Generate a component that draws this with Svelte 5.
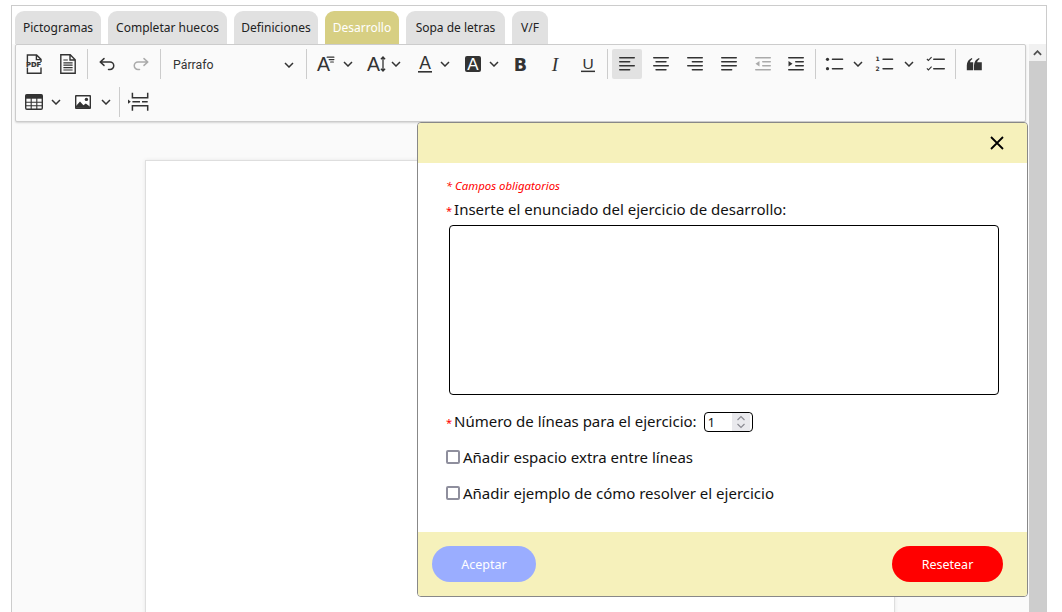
<script>
  const tabs = [
    ['Pictogramas', 86], ['Completar huecos', 119], ['Definiciones', 84],
    ['Desarrollo', 74], ['Sopa de letras', 99], ['V/F', 36]
  ];
  const A = (y = 16.8, x = 7.5, s = 19.5) => `<text x="${x}" y="${y}" font-family="Liberation Sans" font-size="${s}" text-anchor="middle" fill="#333">A</text>`;
  const lines = (rows) => rows.map(([x, y, w]) => `<rect x="${x}" y="${y}" width="${w}" height="1.5" rx=".75"/>`).join('');
  const icons = {
    pdf: `<path d="M3.400 8V1h9.200l4.400 4.400V8M12.400 1.200v4.400H17M3.400 13.600v5.600h13.600v-5.600" fill="none" stroke="#333" stroke-width="1.4"/><text x="9.600" y="13" font-family="DejaVu Sans" font-weight="700" font-size="6.800" text-anchor="middle" fill="#333" stroke="#333" stroke-width=".2">PDF</text>`,
    doc: `<path d="M2.800.8h9.400L17.200 5.800v13.400H2.800zM12 1v5h5" fill="none" stroke="#333" stroke-width="1.4"/><path d="M5.400 6h4.400M5.400 8.800h9.200M5.400 11.200h9.200M5.400 13.600h9.200M5.400 16h9.200" stroke="#333" stroke-width="1.2"/>`,
    undo: `<path d="M7 4.600 3.200 8 7 11.400M3.400 8H13a3.700 3.700 0 0 1 0 7.500h-1.500" fill="none" stroke="#333" stroke-width="1.5" stroke-linecap="round" stroke-linejoin="round"/>`,
    redo: `<path d="M13 4.600 16.800 8 13 11.400M16.600 8H7a3.700 3.700 0 0 0 0 7.500h1.500" fill="none" stroke="#aaa" stroke-width="1.5" stroke-linecap="round" stroke-linejoin="round"/>`,
    size: A() + `<g fill="#333">${lines([[10.5, 2.6, 8], [12.5, 5, 6], [14, 7.4, 4]]).replaceAll('height="1.5"', 'height="1.2"')}</g>`,
    height: A() + `<path d="M17 3v14M14.900 5.200 17 3l2.100 2.200M14.900 14.800 17 17l2.100-2.200" fill="none" stroke="#333" stroke-width="1.3"/>`,
    color: A(15.4, 10, 17.5) + `<rect x="3" y="17" width="14" height="1.6" fill="#333"/>`,
    bg: `<rect x="2" y="2" width="16" height="16" rx="2" fill="#333"/><text x="10" y="16" font-family="Liberation Sans" font-size="17" text-anchor="middle" fill="#fff">A</text>`,
    bold: `<text x="10.500" y="16.600" font-family="DejaVu Sans" font-weight="700" font-size="17.500" text-anchor="middle" fill="#333">B</text>`,
    italic: `<text x="11" y="16.500" font-family="Liberation Serif" font-style="italic" font-size="19.500" text-anchor="middle" fill="#333">I</text>`,
    underline: `<text x="10" y="14.500" font-family="Liberation Sans" font-size="15.500" text-anchor="middle" fill="#333">U</text><rect x="3" y="16.600" width="14" height="1.500" fill="#333"/>`,
    left: `<g fill="#333">${lines([[2, 3, 16], [2, 7, 11.4], [2, 11, 16], [2, 15, 11.4]])}</g>`,
    center: `<g fill="#333">${lines([[2, 3, 16], [4.3, 7, 11.4], [2, 11, 16], [4.3, 15, 11.4]])}</g>`,
    right: `<g fill="#333">${lines([[2, 3, 16], [6.6, 7, 11.4], [2, 11, 16], [6.6, 15, 11.4]])}</g>`,
    justify: `<g fill="#333">${lines([[2, 3, 16], [2, 7, 16], [2, 11, 16], [2, 15, 11.4]])}</g>`,
    outdent: `<g fill="#aaa">${lines([[2, 3, 16], [9, 7, 9], [9, 11, 9], [2, 15, 16]])}<path d="M2.500 9.700 6.500 7v5.400z"/></g>`,
    indent: `<g fill="#333">${lines([[2, 3, 16], [9, 7, 9], [9, 11, 9], [2, 15, 16]])}<path d="M6.500 9.700 2.500 7v5.400z"/></g>`,
    bullets: `<g fill="#333"><circle cx="2.500" cy="5.300" r="1.600"/><circle cx="2.500" cy="14.700" r="1.600"/>${lines([[6.7, 4.6, 11.6], [6.7, 14, 11.6]])}</g>`,
    numbers: `<g fill="#333">${lines([[8.3, 4.6, 11], [8.3, 14, 11]])}</g><text x="3.600" y="7.400" font-family="DejaVu Sans" font-weight="700" font-size="6" text-anchor="middle" fill="#333">1</text><text x="3.600" y="17.400" font-family="DejaVu Sans" font-weight="700" font-size="6" text-anchor="middle" fill="#333">2</text>`,
    todo: `<g fill="#333">${lines([[7, 4.6, 12], [7, 14, 12]])}</g><path d="M.9 5 2.400 6.500 5.600 3.200M.9 14.400l1.500 1.500 3.200-3.300" fill="none" stroke="#333" stroke-width="1.1"/>`,
    quote: `<path d="M1.800 16.300v-5c0-3.600 2-6.200 5-7.400l.6 1.200C6 6 5.200 7.100 5 8.300h3.200v8zM9 16.300v-5c0-3.600 2-6.200 5-7.400l.6 1.200c-1.400.9-2.200 2-2.400 3.200h4.600v8z" fill="#333"/>`,
    table: `<rect x="1.700" y="2.700" width="16.600" height="14.600" rx="1.200" fill="none" stroke="#333" stroke-width="1.4"/><rect x="1.700" y="2.700" width="16.600" height="4" fill="#333"/><path d="M7.200 6v11M12.800 6v11M2 10.200h16M2 13.800h16" stroke="#333" stroke-width="1.1"/>`,
    image: `<rect x="2" y="3" width="16" height="14" rx="1" fill="#333"/><rect x="3.400" y="4.500" width="13.200" height="11" fill="#fff"/><path d="M3 15.800V14l4-4.400 3.400 3.600 2.400-1.600 4 3v1.400z" fill="#333"/><circle cx="13.400" cy="7.400" r="1.700" fill="#333"/>`,
    pagebreak: `<path d="M3.400 .7v5h15.300v-5M3.400 18.700v-5h15.300v5" fill="none" stroke="#333" stroke-width="1.5"/><path d="M3.400 9.700h7.600M13 9.700h5.700" stroke="#333" stroke-width="1.6"/><path d="M-1 7.600l2.800 2.100L-1 11.800z" fill="#333"/>`
  };
  // [icon, tool width, gap before chevron (omitted = no chevron), active]
  const row1 = [
    ['pdf'], ['doc'], 'sep', ['undo'], ['redo'], 'sep', 'heading', 'sep',
    ['size', 50, 2], ['height', 49, 0], ['color', 48, 0], ['bg', 47, 1],
    ['bold'], ['italic'], ['underline'], 'sep',
    ['left', 34, undefined, true], ['center'], ['right'], ['justify'], ['outdent', 33], ['indent'], 'sep',
    ['bullets', 49, 3], ['numbers', 52, 5], ['todo'], 'sep', ['quote']
  ];
  const row2 = [['table', 49, 2], ['image', 51, 3], 'sep', ['pagebreak']];
</script>

{#snippet chevron()}
  <svg class="chev" viewBox="0 0 10 6" aria-hidden="true"><path d="M1 1l4 4 4-4" /></svg>
{/snippet}

{#snippet toolbarRow(items)}
  <div class="row">
    {#each items as item}
      {#if item === 'sep'}
        <span class="sep"></span>
      {:else if item === 'heading'}
        <div class="heading"><span>Párrafo</span>{@render chevron()}</div>
      {:else}
        <div class="tool" style:width={item[1] ? item[1] + 'px' : null}>
          <span class="btn" class:on={item[3]}>
            <svg viewBox="0 0 20 20" aria-hidden="true">{@html icons[item[0]]}</svg>
          </span>
          {#if item[2] !== undefined}<span class="chevbox" style:margin-left={item[2] + 'px'}>{@render chevron()}</span>{/if}
        </div>
      {/if}
    {/each}
  </div>
{/snippet}

<div class="frame">
  <nav class="tabs">
    {#each tabs as [t, w]}
      <div class="tab" class:active={t === 'Desarrollo'} style:width={w + 'px'}>{t}</div>
    {/each}
  </nav>
  <div class="main">
    <div class="content">
      <div class="toolbar">
        {@render toolbarRow(row1)}
        {@render toolbarRow(row2)}
      </div>
      <div class="page"></div>
    </div>
    <div class="scrollbar">
      <div class="arrow"><svg viewBox="0 0 10 6" aria-hidden="true"><path d="M1 5l4-4 4 4" /></svg></div>
      <div class="thumb"></div>
    </div>
    <section class="modal">
      <header>
        <svg viewBox="0 0 16 16" aria-hidden="true"><path d="M2 2l12 12M14 2 2 14" /></svg>
      </header>
      <div class="form">
        <p class="required"><span class="star">*</span> Campos obligatorios</p>
        <label class="field-label" for="enun"><span class="star">*</span>Inserte el enunciado del ejercicio de desarrollo:</label>
        <textarea id="enun"></textarea>
        <div class="num-row">
          <label for="num"><span class="star">*</span>Número de líneas para el ejercicio:</label>
          <div class="numbox">
            <input id="num" type="number" value="1" />
            <span class="spin">
              <svg viewBox="0 0 10 14" aria-hidden="true"><path d="M1.500 5 5 1.500 8.500 5M1.500 9 5 12.500 8.500 9" /></svg>
            </span>
          </div>
        </div>
        <label class="check first"><input type="checkbox" />Añadir espacio extra entre líneas</label>
        <label class="check"><input type="checkbox" />Añadir ejemplo de cómo resolver el ejercicio</label>
      </div>
      <footer>
        <button class="accept">Aceptar</button>
        <button class="reset">Resetear</button>
      </footer>
    </section>
  </div>
</div>

<style>
  :global(body) {
    margin: 0;
    height: 612px;
    overflow: hidden;
    background: #fff;
    font-family: "Noto Sans", "Open Sans", sans-serif;
  }
  .frame {
    margin: 5px 15px 0 11px;
    height: 607px;
    box-sizing: border-box;
    border: 1px solid #ccc;
    border-bottom: 0;
    display: flex;
    flex-direction: column;
    background: #fff;
    overflow: hidden;
  }
  .tabs {
    display: flex;
    gap: 7px;
    padding: 5px 0 0 3px;
    box-sizing: border-box;
    height: 38px;
    flex: none;
  }
  .tab {
    height: 33px;
    box-sizing: border-box;
    display: flex;
    align-items: center;
    justify-content: center;
    white-space: nowrap;
    font-size: 12px;
    color: #222;
    background: #e1e1e1;
    border-radius: 9px 9px 0 0;
  }
  .tab.active {
    background: #d7cf83;
    color: #fff;
  }
  .main {
    position: relative;
    flex: 1;
    display: flex;
    min-height: 0;
  }
  .content {
    flex: 1;
    background: #fafafa;
    min-width: 0;
    overflow: hidden;
  }
  .toolbar {
    margin: 0 3px;
    box-sizing: border-box;
    height: 78px;
    padding: 4px 0 0 1px;
    background: #fafafa;
    border: 1px solid #ccc;
    border-radius: 2px;
    box-shadow: 0 1px 2px rgba(0, 0, 0, .15);
    position: relative;
    display: flex;
    flex-direction: column;
    gap: 8px;
  }
  .row {
    display: flex;
    align-items: center;
    height: 30px;
  }
  .tool {
    display: flex;
    align-items: center;
    width: 34px;
    flex: none;
    padding-left: 2px;
    box-sizing: border-box;
  }
  .btn {
    width: 30px;
    height: 30px;
    flex: none;
    display: flex;
    align-items: center;
    justify-content: center;
    border-radius: 2px;
  }
  .btn.on { background: #e2e2e2; }
  .btn svg { width: 20px; height: 20px; display: block; overflow: visible; }
  .chevbox { display: flex; }
  .chev { width: 10px; height: 6px; display: block; flex: none; }
  .chev path {
    fill: none;
    stroke: #333;
    stroke-width: 1.5;
  }
  .sep {
    width: 1px;
    height: 30px;
    background: #ccc;
    margin: 0 2px;
    flex: none;
  }
  .heading {
    width: 136px;
    margin: 0 3px 0 2px;
    flex: none;
    display: flex;
    align-items: center;
    justify-content: space-between;
    padding: 1px 7px 0 8px;
    box-sizing: border-box;
    font: 12.300px Roboto, sans-serif;
    color: #333;
  }
  .page {
    width: 750px;
    height: 600px;
    margin: 38px 0 0 133px;
    box-sizing: border-box;
    background: #fff;
    border: 1px solid #dedede;
    box-shadow: 0 0 4px rgba(0, 0, 0, .08);
  }
  .scrollbar {
    width: 17px;
    flex: none;
    display: flex;
    flex-direction: column;
    background: #f1f1f1;
  }
  .arrow {
    height: 17px;
    flex: none;
    display: flex;
    align-items: center;
    justify-content: center;
  }
  .arrow svg { width: 9px; height: 6px; }
  .arrow path { fill: none; stroke: #505050; stroke-width: 2; }
  .thumb { flex: 1; background: #cdcdcd; }
  .modal {
    position: absolute;
    left: 405px;
    top: 78px;
    width: 611px;
    height: 475px;
    box-sizing: border-box;
    display: flex;
    flex-direction: column;
    background: #fff;
    border: 1px solid #888;
    border-radius: 4px;
    overflow: hidden;
    color: #111;
  }
  header {
    height: 40px;
    flex: none;
    background: #f6f1bb;
    display: flex;
    align-items: center;
    justify-content: flex-end;
    padding-right: 22px;
  }
  header svg { width: 16px; height: 16px; }
  header path { fill: none; stroke: #000; stroke-width: 1.8; }
  .form {
    flex: 1;
    padding: 15px 28px 0 28px;
    display: flex;
    flex-direction: column;
    align-items: flex-start;
  }
  .required {
    margin: 0;
    font-size: 11.400px;
    line-height: 16px;
    font-style: italic;
    color: #f00;
  }
  .star { color: #f00; font-size: 11px; margin-right: 2px; }
  .required .star { margin: 0; }
  .field-label { font-size: 15px; line-height: 20px; margin-top: 5px; }
  textarea {
    display: block;
    width: 550px;
    height: 170px;
    margin: 4px 0 0 3px;
    box-sizing: border-box;
    border: 1px solid #000;
    border-radius: 4px;
    background: #fff;
    resize: none;
    padding: 0;
    outline: 0;
  }
  .num-row {
    display: flex;
    align-items: center;
    margin-top: 17px;
    font-size: 15px;
    line-height: 20px;
    height: 20px;
  }
  .numbox {
    width: 49px;
    height: 20px;
    margin-left: 7px;
    box-sizing: border-box;
    border: 1px solid #000;
    border-radius: 4px;
    display: flex;
    align-items: stretch;
    overflow: hidden;
    background: #fff;
  }
  input[type=number] {
    flex: 1;
    min-width: 0;
    border: 0;
    padding: 0 0 0 3px;
    outline: 0;
    background: transparent;
    appearance: textfield;
    font: 12.500px "Noto Sans", sans-serif;
    color: #111;
  }
  input[type=number]::-webkit-inner-spin-button { appearance: none; }
  .spin {
    width: 18px;
    margin-right: 2px;
    flex: none;
    background: #e9e9ed;
    display: flex;
    align-items: center;
    justify-content: center;
  }
  .spin svg { width: 10px; height: 14px; }
  .spin path { fill: none; stroke: #8a8a92; stroke-width: 1.2; }
  .check {
    display: flex;
    align-items: center;
    font-size: 15px;
    line-height: 20px;
    margin-top: 16px;
    height: 20px;
  }
  .check.first { margin-top: 15px; }
  .check input {
    appearance: none;
    width: 14px;
    height: 14px;
    margin: 0 3px 0 0;
    box-sizing: border-box;
    border: 2px solid #8f8f9d;
    border-radius: 2px;
    background: #fff;
  }
  footer {
    height: 64px;
    flex: none;
    background: #f6f1bb;
    display: flex;
    align-items: flex-start;
    justify-content: space-between;
    padding: 14px 24px 0 14px;
    box-sizing: border-box;
  }
  button {
    height: 36px;
    border: 0;
    border-radius: 18px;
    color: #fff;
    font: 12.500px "Noto Sans", sans-serif;
    padding: 0;
  }
  .accept { width: 104px; background: #9aadff; }
  .reset { width: 111px; background: #f00; }
</style>
